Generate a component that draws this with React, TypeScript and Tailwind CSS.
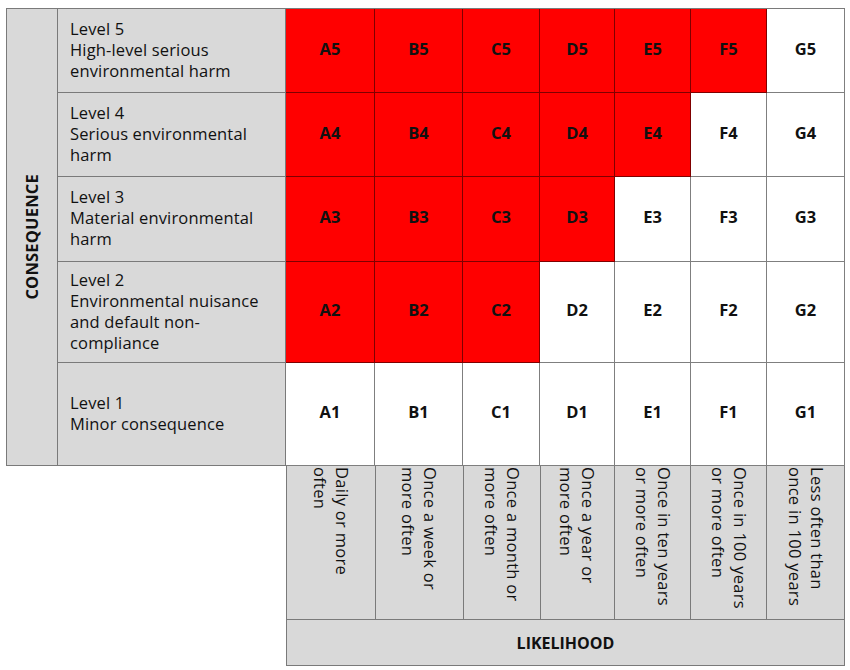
import React from "react";

const cols = ["A", "B", "C", "D", "E", "F", "G"];
// number of red cells per level
const redCount: Record<number, number> = { 5: 6, 4: 5, 3: 4, 2: 3, 1: 0 };

const levels = [
  { n: 5, lines: ["Level 5", "High-level serious", "environmental harm"], h: "h-[84px]" },
  { n: 4, lines: ["Level 4", "Serious environmental", "harm"], h: "h-[84px]" },
  { n: 3, lines: ["Level 3", "Material environmental", "harm"], h: "h-[85px]" },
  { n: 2, lines: ["Level 2", "Environmental nuisance", "and default non-", "compliance"], h: "h-[101px]" },
  { n: 1, lines: ["Level 1", "Minor consequence"], h: "h-[103px]" },
];

const likelihood = [
  ["Daily or more", "often"],
  ["Once a week or", "more often"],
  ["Once a month or", "more often"],
  ["Once a year or", "more often"],
  ["Once in ten years", "or more often"],
  ["Once in 100 years", "or more often"],
  ["Less often than", "once in 100 years"],
];

const colW = ["w-[89px]", "w-[88px]", "w-[77px]", "w-[75px]", "w-[76px]", "w-[76px]", "w-[78px]"];

export default function App() {
  return (
    <div className="w-[850px] h-[670px] bg-white pt-[8px] pl-[6px] text-[#111]" style={{ fontFamily: "'Open Sans', 'DejaVu Sans', sans-serif" }}>
      <div className="flex border-t border-l border-[#7a7a7a] w-[839px]">
        {/* CONSEQUENCE column */}
        <div className="w-[52px] bg-[#d9d9d9] border-r border-b border-[#7a7a7a] flex items-center justify-center">
          <span className="font-bold text-[16.5px] tracking-[0.2px] rotate-180" style={{ writingMode: "vertical-rl" }}>
            CONSEQUENCE
          </span>
        </div>
        <div className="flex flex-col">
          {levels.map((lv) => (
            <div key={lv.n} className={`flex ${lv.h}`}>
              <div className="w-[228px] bg-[#d9d9d9] border-r border-b border-[#7a7a7a] flex flex-col justify-center pl-[12px] pb-[3px] text-[16.5px] tracking-[0.15px] leading-[21px]">
                {lv.lines.map((l) => (
                  <div key={l}>{l}</div>
                ))}
              </div>
              {cols.map((c, i) => {
                const red = i < redCount[lv.n];
                return (
                  <div
                    key={c}
                    className={`${colW[i]} border-r border-b border-[rgba(0,0,0,0.5)] flex items-center justify-center pb-[3px] font-bold text-[16.5px] ${red ? "bg-[#ff0000]" : "bg-white"}`}
                  >
                    {c}
                    {lv.n}
                  </div>
                );
              })}
            </div>
          ))}
        </div>
      </div>
      <div className="ml-[280px] w-[559px] border-l border-[#7a7a7a]">
        <div className="flex h-[154px]">
          {likelihood.map((lines, i) => (
            <div key={i} className={`${colW[i]} bg-[#d9d9d9] border-r border-b border-[#7a7a7a] flex justify-center pt-[1px]`}>
              <div className="text-[16.5px] tracking-[0.3px] leading-[22px]" style={{ writingMode: "vertical-rl" }}>
                {lines.map((l) => (
                  <div key={l}>{l}</div>
                ))}
              </div>
            </div>
          ))}
        </div>
        <div className="h-[46px] bg-[#d9d9d9] border-r border-b border-[#7a7a7a] flex items-center justify-center font-bold text-[16px]">
          LIKELIHOOD
        </div>
      </div>
    </div>
  );
}
